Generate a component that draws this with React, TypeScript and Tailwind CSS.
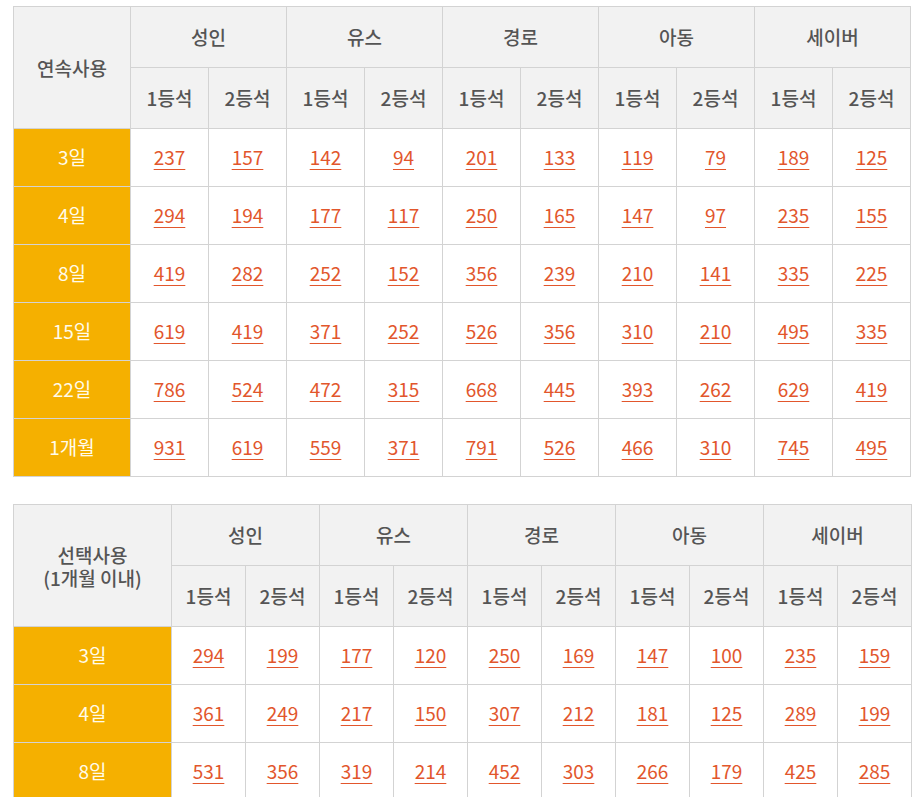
import React from 'react';

const groups = ['성인', '유스', '경로', '아동', '세이버'];

const continuous: [string, number[]][] = [
  ['3일', [237, 157, 142, 94, 201, 133, 119, 79, 189, 125]],
  ['4일', [294, 194, 177, 117, 250, 165, 147, 97, 235, 155]],
  ['8일', [419, 282, 252, 152, 356, 239, 210, 141, 335, 225]],
  ['15일', [619, 419, 371, 252, 526, 356, 310, 210, 495, 335]],
  ['22일', [786, 524, 472, 315, 668, 445, 393, 262, 629, 419]],
  ['1개월', [931, 619, 559, 371, 791, 526, 466, 310, 745, 495]],
];

const selective: [string, number[]][] = [
  ['3일', [294, 199, 177, 120, 250, 169, 147, 100, 235, 159]],
  ['4일', [361, 249, 217, 150, 307, 212, 181, 125, 289, 199]],
  ['8일', [531, 356, 319, 214, 452, 303, 266, 179, 425, 285]],
];

function PriceTable({
  title,
  rows,
  firstWidth,
  colWidth,
}: {
  title: React.ReactNode;
  rows: [string, number[]][];
  firstWidth: string;
  colWidth: string;
}) {
  return (
    <table className="w-[898px] table-fixed border-collapse text-center">
      <colgroup>
        <col className={firstWidth} />
        {Array.from({ length: 10 }).map((_, i) => (
          <col key={i} className={colWidth} />
        ))}
      </colgroup>
      <thead>
        <tr className="h-[61px] bg-[#f2f2f2]">
          <th
            rowSpan={2}
            className="border border-[#d3d3d3] text-[19px] font-medium leading-[23px] text-[#555]"
          >
            {title}
          </th>
          {groups.map((g) => (
            <th
              key={g}
              colSpan={2}
              className="border border-[#d3d3d3] text-[19px] font-medium text-[#555]"
            >
              {g}
            </th>
          ))}
        </tr>
        <tr className="h-[61px] bg-[#f2f2f2]">
          {groups.map((g) => (
            <React.Fragment key={g}>
              <th className="border border-[#d3d3d3] text-[19px] font-medium text-[#555]">1등석</th>
              <th className="border border-[#d3d3d3] text-[19px] font-medium text-[#555]">2등석</th>
            </React.Fragment>
          ))}
        </tr>
      </thead>
      <tbody>
        {rows.map(([label, vals]) => (
          <tr key={label} className="h-[58px]">
            <td className="border border-[#d3d3d3] bg-[#f5b000] text-[19px] text-[#fffbea]">
              {label}
            </td>
            {vals.map((v, i) => (
              <td key={i} className="border border-[#d3d3d3] bg-white text-[19px]">
                <a href="#" className="text-[#e2562c] underline underline-offset-[4px]">
                  {v}
                </a>
              </td>
            ))}
          </tr>
        ))}
      </tbody>
    </table>
  );
}

export default function App() {
  return (
    <div
      className="min-h-screen bg-white pl-[13px] pt-[6px]"
      style={{ fontFamily: '"Noto Sans CJK KR", "Noto Sans", sans-serif' }}
    >
      <PriceTable title="연속사용" rows={continuous} firstWidth="w-[117px]" colWidth="w-[78px]" />
      <div className="h-[27px]" />
      <PriceTable
        title={
          <>
            선택사용
            <br />
            (1개월 이내)
          </>
        }
        rows={selective}
        firstWidth="w-[158px]"
        colWidth="w-[74px]"
      />
    </div>
  );
}
